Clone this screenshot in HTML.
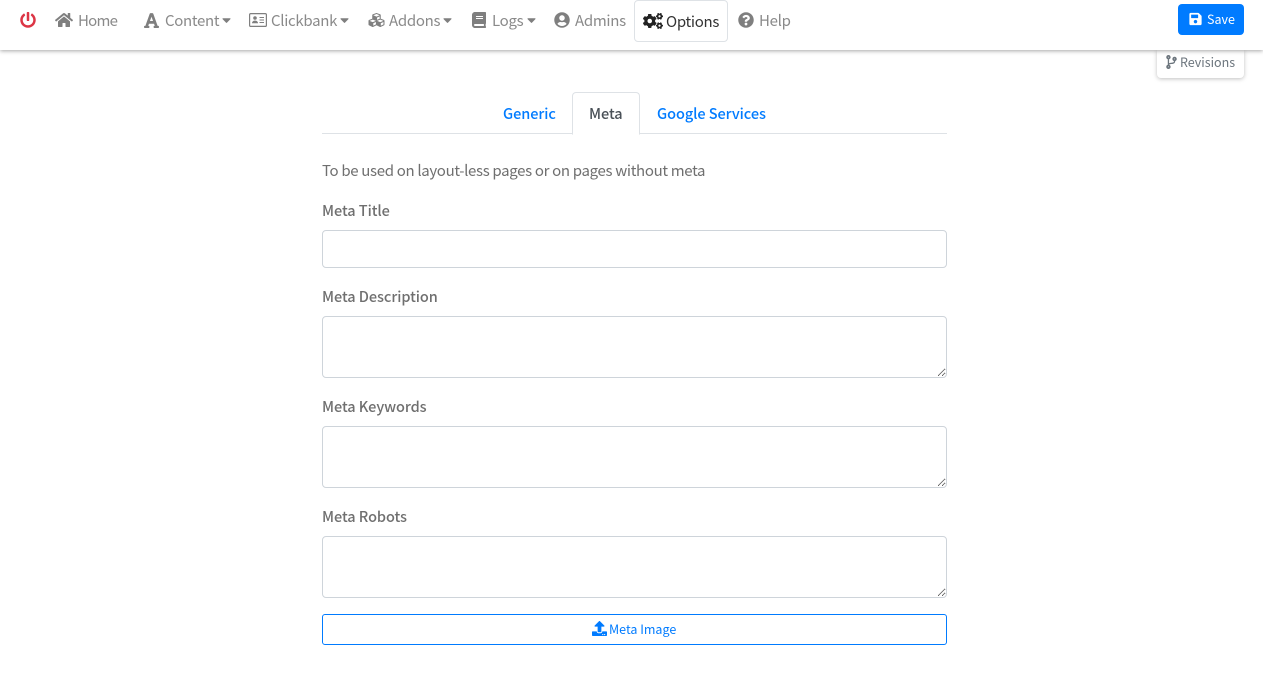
<!DOCTYPE html>
<html lang="en"><head><meta charset="utf-8"><title>Options</title>
<style>
html,body{margin:0;padding:0;width:1263px;height:683px;overflow:hidden;background:#fff}
body{position:relative;font-family:"Noto Sans CJK JP","Liberation Sans",sans-serif;color:#6f6f6f}
.t{position:absolute;white-space:nowrap;line-height:20px;height:20px}
.n{font-size:15px;color:#8a8a8a;top:11px;letter-spacing:-.3px}
.b{font-weight:500;font-size:14.5px;letter-spacing:-.06px}
svg{position:absolute;display:block}
.g{fill:#7f7f7f}
.nav{position:absolute;left:0;top:0;width:1263px;height:50px;background:#fff;box-shadow:0 1px 4px rgba(0,0,0,.35);z-index:3}
.rev{position:absolute;left:1157px;top:50px;width:87px;height:28px;background:#fff;border-radius:0 0 4px 4px;box-shadow:0 1px 4px rgba(0,0,0,.25);z-index:1}
.f{position:absolute;left:322px;width:623px;border:1px solid #ced4da;border-radius:4px;background:#fff;padding:0;margin:0;display:block;box-sizing:content-box;outline:0}
textarea.f{resize:vertical}
</style></head><body>
<div class="rev"></div>
<div class="nav">
<svg style="left:20px;top:12px" width="16" height="16" viewBox="0 0 512 512" fill="#dc3545"><path d="M400 54.1c63 45 104 118.6 104 201.9 0 136.8-110.8 247.7-247.5 248C120 504.3 8.2 393 8 256.4 7.9 173.1 48.9 99.3 111.8 54.2c11.7-8.3 28-4.8 35 7.7L162.6 90c5.9 10.5 3.1 23.8-6.6 31-41.5 30.8-68 79.6-68 134.9-.1 92.3 74.5 168.1 168 168.1 91.6 0 168.6-74.2 168-169.1-.3-51.8-24.7-101.8-68.1-134-9.7-7.2-12.4-20.5-6.4-30.9l15.8-28.1c7-12.4 23.2-16.1 34.8-7.8zM296 264V24c0-13.3-10.7-24-24-24h-32c-13.3 0-24 10.7-24 24v240c0 13.3 10.7 24 24 24h32c13.3 0 24-10.7 24-24z"/></svg>
<svg class="g" style="left:55px;top:12px" width="18" height="16" viewBox="0 0 576 512"><path d="M280.37 148.26L96 300.11V464a16 16 0 0 0 16 16l112.06-.29a16 16 0 0 0 15.92-16V368a16 16 0 0 1 16-16h64a16 16 0 0 1 16 16v95.64a16 16 0 0 0 16 16.05L464 480a16 16 0 0 0 16-16V300L295.67 148.26a12.19 12.19 0 0 0-15.3 0zM571.6 251.47L488 182.56V44.05a12 12 0 0 0-12-12h-56a12 12 0 0 0-12 12v72.61L318.47 43a48 48 0 0 0-61 0L4.34 251.47a12 12 0 0 0-1.6 16.9l25.5 31A12 12 0 0 0 45.15 301l235.22-193.74a12.19 12.19 0 0 1 15.3 0L530.9 301a12 12 0 0 0 16.9-1.6l25.5-31a12 12 0 0 0-1.7-16.93z"/></svg>
<span class="t n" style="left:78px;letter-spacing:-.75px">Home</span>
<svg class="g" style="left:144px;top:12px" width="15" height="17" viewBox="0 0 448 512"><path d="M432 416h-23.41L277.88 53.69A32 32 0 0 0 247.58 32h-47.16a32 32 0 0 0-30.3 21.69L39.41 416H16a16 16 0 0 0-16 16v32a16 16 0 0 0 16 16h128a16 16 0 0 0 16-16v-32a16 16 0 0 0-16-16h-19.58l23.3-64h152.56l23.3 64H304a16 16 0 0 0-16 16v32a16 16 0 0 0 16 16h128a16 16 0 0 0 16-16v-32a16 16 0 0 0-16-16zM176.85 272L224 142.51 271.15 272z"/></svg>
<span class="t n" style="left:165px">Content</span>
<svg class="g" style="left:221px;top:13px" width="11" height="14" viewBox="0 0 320 512"><path d="M31.3 192h257.3c17.8 0 26.7 21.5 14.1 34.1L174.1 354.8c-7.8 7.8-20.5 7.8-28.3 0L17.2 226.1C4.6 213.5 13.5 192 31.3 192z"/></svg>
<svg style="left:249px;top:13px" width="18" height="14" viewBox="0 0 18 14"><rect x=".6" y=".6" width="16.8" height="12.8" rx="1.2" fill="none" stroke="#7f7f7f" stroke-width="1.2"/><circle cx="6" cy="5" r="1.8" fill="#7f7f7f"/><path d="M3 10.2c0-1.6 1.2-2.6 3-2.6s3 1 3 2.6z" fill="#7f7f7f"/><path d="M10.5 4.5h4.5M10.5 7h4.5M10.5 9.5h4.5" stroke="#7f7f7f" stroke-width="1"/></svg>
<span class="t n" style="left:271px">Clickbank</span>
<svg class="g" style="left:339px;top:13px" width="11" height="14" viewBox="0 0 320 512"><path d="M31.3 192h257.3c17.8 0 26.7 21.5 14.1 34.1L174.1 354.8c-7.8 7.8-20.5 7.8-28.3 0L17.2 226.1C4.6 213.5 13.5 192 31.3 192z"/></svg>
<svg class="g" style="left:368px;top:12px" width="17" height="16" viewBox="0 0 512 512"><path d="M488.6 250.2L392 214V105.5c0-15-9.3-28.4-23.4-33.7l-100-37.5c-8.1-3.1-17.1-3.1-25.3 0l-100 37.5c-14.1 5.3-23.4 18.7-23.4 33.7V214l-96.6 36.2C9.3 255.5 0 268.9 0 283.9V394c0 13.6 7.7 26.1 19.9 32.2l100 50c10.1 5.1 22.1 5.1 32.2 0l103.9-52 103.9 52c10.1 5.1 22.1 5.1 32.2 0l100-50c12.2-6.1 19.9-18.6 19.9-32.2V283.9c0-15-9.3-28.4-23.4-33.7zM358 214.8l-85 31.9v-68.2l85-37v73.3zM154 104.1l102-38.2 102 38.2v.6l-102 41.4-102-41.4v-.6zm84 291.1l-85 42.5v-79.1l85-38.8v75.4zm0-112l-102 41.4-102-41.4v-.6l102-38.2 102 38.2v.6zm240 112l-85 42.5v-79.1l85-38.8v75.4zm0-112l-102 41.4-102-41.4v-.6l102-38.2 102 38.2v.6z"/></svg>
<span class="t n" style="left:389px">Addons</span>
<svg class="g" style="left:442px;top:13px" width="11" height="14" viewBox="0 0 320 512"><path d="M31.3 192h257.3c17.8 0 26.7 21.5 14.1 34.1L174.1 354.8c-7.8 7.8-20.5 7.8-28.3 0L17.2 226.1C4.6 213.5 13.5 192 31.3 192z"/></svg>
<svg class="g" style="left:472px;top:12px" width="14" height="16" viewBox="0 0 448 512"><path d="M448 360V24c0-13.3-10.7-24-24-24H96C43 0 0 43 0 96v320c0 53 43 96 96 96h328c13.3 0 24-10.7 24-24v-16c0-7.5-3.5-14.3-8.9-18.7-4.2-15.4-4.2-59.3 0-74.7 5.4-4.3 8.9-11.1 8.9-18.6zM128 134c0-3.3 2.7-6 6-6h212c3.3 0 6 2.7 6 6v20c0 3.3-2.7 6-6 6H134c-3.3 0-6-2.7-6-6v-20zm0 64c0-3.3 2.7-6 6-6h212c3.3 0 6 2.7 6 6v20c0 3.3-2.7 6-6 6H134c-3.3 0-6-2.7-6-6v-20zm253.4 250H96c-17.7 0-32-14.3-32-32 0-17.6 14.4-32 32-32h285.4c-1.9 17.1-1.9 46.9 0 64z"/></svg>
<span class="t n" style="left:492px">Logs</span>
<svg class="g" style="left:526px;top:13px" width="11" height="14" viewBox="0 0 320 512"><path d="M31.3 192h257.3c17.8 0 26.7 21.5 14.1 34.1L174.1 354.8c-7.8 7.8-20.5 7.8-28.3 0L17.2 226.1C4.6 213.5 13.5 192 31.3 192z"/></svg>
<svg class="g" style="left:554px;top:12px" width="16" height="16" viewBox="0 0 496 512"><path d="M248 8C111 8 0 119 0 256s111 248 248 248 248-111 248-248S385 8 248 8zm0 96c48.6 0 88 39.4 88 88s-39.4 88-88 88-88-39.4-88-88 39.4-88 88-88zm0 344c-58.7 0-111.3-26.6-146.5-68.2 18.8-35.4 55.6-59.8 98.5-59.8 2.4 0 4.8.4 7.1 1.1 13 4.2 26.6 6.9 40.9 6.9 14.3 0 28-2.7 40.9-6.9 2.3-.7 4.7-1.1 7.1-1.1 42.9 0 79.7 24.4 98.5 59.8C359.3 421.4 306.7 448 248 448z"/></svg>
<span class="t n" style="left:575px">Admins</span>
<div style="position:absolute;left:634px;top:0;width:92px;height:40px;border:1px solid #dee2e6;border-radius:4px"></div>
<svg style="left:643px;top:13px" width="20" height="16" viewBox="0 0 640 512" fill="#222"><path d="M512.1 191l-8.2 14.3c-3 5.3-9.4 7.5-15.1 5.4-11.8-4.4-22.6-10.7-32.1-18.6-4.6-3.8-5.8-10.5-2.8-15.7l8.2-14.3c-6.9-8-12.3-17.3-15.9-27.4h-16.5c-6 0-11.2-4.3-12.2-10.3-2-12-2.1-24.6 0-37.1 1-6 6.2-10.4 12.2-10.4h16.5c3.6-10.1 9-19.4 15.9-27.4l-8.2-14.3c-3-5.2-1.9-11.9 2.8-15.7 9.5-7.9 20.4-14.2 32.1-18.6 5.7-2.1 12.1.1 15.1 5.4l8.2 14.3c10.5-1.9 21.2-1.9 31.7 0L552 6.3c3-5.3 9.4-7.5 15.1-5.4 11.8 4.4 22.6 10.7 32.1 18.6 4.6 3.8 5.8 10.5 2.8 15.7l-8.2 14.3c6.9 8 12.3 17.3 15.9 27.4h16.5c6 0 11.2 4.3 12.2 10.3 2 12 2.1 24.6 0 37.1-1 6-6.2 10.4-12.2 10.4h-16.5c-3.6 10.1-9 19.4-15.9 27.4l8.2 14.3c3 5.2 1.9 11.9-2.8 15.7-9.5 7.9-20.4 14.2-32.1 18.6-5.7 2.1-12.1-.1-15.1-5.4l-8.2-14.3c-10.4 1.9-21.2 1.9-31.7 0zm-10.5-58.8c38.5 29.6 82.4-14.3 52.8-52.8-38.5-29.7-82.4 14.3-52.8 52.8zM386.3 286.1l33.7 16.8c10.1 5.8 14.5 18.1 10.5 29.1-8.9 24.2-26.4 46.4-42.6 65.8-7.4 8.9-20.2 11.1-30.3 5.3l-29.1-16.8c-16 13.7-34.6 24.6-54.9 31.7v33.6c0 11.6-8.3 21.6-19.7 23.6-24.6 4.2-50.4 4.4-75.9 0-11.5-2-20-11.9-20-23.6V418c-20.3-7.2-38.9-18-54.9-31.7L74 403c-10 5.8-22.9 3.6-30.3-5.3-16.2-19.4-33.3-41.6-42.2-65.7-4-10.9.4-23.2 10.5-29.1l33.3-16.8c-3.9-20.9-3.9-42.4 0-63.4L12 205.8c-10.1-5.8-14.6-18.1-10.5-29 8.9-24.2 26-46.4 42.2-65.8 7.4-8.9 20.2-11.1 30.3-5.3l29.1 16.8c16-13.7 34.6-24.6 54.9-31.7V57.1c0-11.5 8.2-21.5 19.6-23.5 24.6-4.2 50.5-4.4 76-.1 11.5 2 20 11.9 20 23.6v33.6c20.3 7.2 38.9 18 54.9 31.7l29.1-16.8c10-5.8 22.9-3.6 30.3 5.3 16.2 19.4 33.2 41.6 42.1 65.8 4 10.9.1 23.2-10 29.1l-33.7 16.8c3.9 21 3.9 42.5 0 63.5zm-117.6 21.1c59.2-77-28.7-164.9-105.7-105.7-59.2 77 28.7 164.9 105.7 105.7zm243.4 182.7l-8.2 14.3c-3 5.3-9.4 7.5-15.1 5.4-11.8-4.4-22.6-10.7-32.1-18.6-4.6-3.8-5.8-10.5-2.8-15.7l8.2-14.3c-6.9-8-12.3-17.3-15.9-27.4h-16.5c-6 0-11.2-4.3-12.2-10.3-2-12-2.1-24.6 0-37.1 1-6 6.2-10.4 12.2-10.4h16.5c3.6-10.1 9-19.4 15.9-27.4l-8.2-14.3c-3-5.2-1.9-11.9 2.8-15.7 9.5-7.9 20.4-14.2 32.1-18.6 5.7-2.1 12.1.1 15.1 5.4l8.2 14.3c10.5-1.9 21.2-1.9 31.7 0l8.2-14.3c3-5.3 9.4-7.5 15.1-5.4 11.8 4.4 22.6 10.7 32.1 18.6 4.6 3.8 5.8 10.5 2.8 15.7l-8.2 14.3c6.9 8 12.3 17.3 15.9 27.4h16.5c6 0 11.2 4.3 12.2 10.3 2 12 2.1 24.6 0 37.1-1 6-6.2 10.4-12.2 10.4h-16.5c-3.6 10.1-9 19.4-15.9 27.4l8.2 14.3c3 5.2 1.9 11.9-2.8 15.7-9.5 7.9-20.4 14.2-32.1 18.6-5.7 2.1-12.1-.1-15.1-5.4l-8.2-14.3c-10.4 1.9-21.2 1.9-31.7 0zM501.6 431c38.5 29.6 82.4-14.3 52.8-52.8-38.5-29.6-82.4 14.3-52.8 52.8z"/></svg>
<span class="t" style="left:666px;top:12px;font-size:15px;color:#333;letter-spacing:-.3px">Options</span>
<svg class="g" style="left:738px;top:12px" width="16" height="16" viewBox="0 0 512 512"><path d="M504 256c0 136.997-111.043 248-248 248S8 392.997 8 256C8 119.083 119.043 8 256 8s248 111.083 248 248zM262.655 90c-54.497 0-89.255 22.957-116.549 63.758-3.536 5.286-2.353 12.415 2.715 16.258l34.699 26.31c5.205 3.947 12.621 3.008 16.665-2.122 17.864-22.658 30.113-35.797 57.303-35.797 20.429 0 45.698 13.148 45.698 32.958 0 14.976-12.363 22.667-32.534 33.976C247.128 238.528 216 254.941 216 296v4c0 6.627 5.373 12 12 12h56c6.627 0 12-5.373 12-12v-1.333c0-28.462 83.186-29.647 83.186-106.667 0-58.002-60.165-102-116.531-102zM256 338c-25.365 0-46 20.635-46 46 0 25.364 20.635 46 46 46s46-20.636 46-46c0-25.365-20.635-46-46-46z"/></svg>
<span class="t n" style="left:759px">Help</span>
<div style="position:absolute;left:1178px;top:4px;width:66px;height:31px;background:#007bff;border-radius:4px"></div>
<svg style="left:1189px;top:12px" width="13" height="14" viewBox="0 0 448 512" fill="#fff"><path d="M433.941 129.941l-83.882-83.882A48 48 0 0 0 316.118 32H48C21.49 32 0 53.49 0 80v352c0 26.51 21.49 48 48 48h352c26.51 0 48-21.49 48-48V163.882a48 48 0 0 0-14.059-33.941zM224 416c-35.346 0-64-28.654-64-64 0-35.346 28.654-64 64-64s64 28.654 64 64c0 35.346-28.654 64-64 64zm96-304.52V212c0 6.627-5.373 12-12 12H76c-6.627 0-12-5.373-12-12V108c0-6.627 5.373-12 12-12h228.52c3.183 0 6.235 1.264 8.485 3.515l3.48 3.48A11.996 11.996 0 0 1 320 111.48z"/></svg>
<span class="t" style="left:1207px;top:9px;font-size:12.5px;color:#fff">Save</span>
</div>
<svg style="left:1166px;top:55px;z-index:2" width="11" height="14" viewBox="0 0 384 512" fill="#6c757d"><path d="M384 144c0-44.2-35.8-80-80-80s-80 35.8-80 80c0 36.4 24.3 67.1 57.5 76.8-.6 16.1-4.2 28.5-11 36.9-15.4 19.2-49.3 22.4-85.2 25.7-28.2 2.6-57.4 5.4-81.3 16.9v-144c32.5-10.2 56-40.5 56-76.3 0-44.2-35.8-80-80-80S0 35.8 0 80c0 35.8 23.5 66.1 56 76.3v199.3C23.5 365.9 0 396.2 0 432c0 44.2 35.8 80 80 80s80-35.8 80-80c0-34-21.2-63.1-51.2-74.6 3.1-5.2 7.8-9.8 14.9-13.4 16.2-8.2 40.4-10.4 66.1-12.8 42.2-3.9 90-8.4 118.2-43.4 14-17.4 21.1-39.8 21.6-67.9 31.6-10.8 54.4-40.7 54.4-75.9zM80 64c8.8 0 16 7.2 16 16s-7.2 16-16 16-16-7.2-16-16 7.2-16 16-16zm0 384c-8.8 0-16-7.2-16-16s7.2-16 16-16 16 7.2 16 16-7.2 16-16 16zm224-320c8.8 0 16 7.2 16 16s-7.2 16-16 16-16-7.2-16-16 7.2-16 16-16z"/></svg>
<span class="t" style="left:1180px;top:52px;font-size:12.5px;color:#6c757d;z-index:2">Revisions</span>

<div style="position:absolute;left:322px;top:133px;width:625px;height:1px;background:#dee2e6"></div>
<div style="position:absolute;left:572px;top:92px;width:66px;height:41px;border:1px solid #dee2e6;border-bottom:1px solid #fff;border-radius:4px 4px 0 0;background:#fff"></div>
<span class="t b" style="left:503px;top:104px;color:#007bff">Generic</span>
<span class="t b" style="left:589px;top:104px;color:#495057">Meta</span>
<span class="t b" style="left:657px;top:104px;color:#007bff">Google Services</span>
<span class="t" style="left:322px;top:161px;font-size:15px;letter-spacing:-.33px">To be used on layout-less pages or on pages without meta</span>
<span class="t b" style="left:322px;top:201px">Meta Title</span>
<input class="f" style="top:230px;height:36px">
<span class="t b" style="left:322px;top:287px">Meta Description</span>
<textarea class="f" style="top:316px;height:60px"></textarea>
<span class="t b" style="left:322px;top:397px">Meta Keywords</span>
<textarea class="f" style="top:426px;height:60px"></textarea>
<span class="t b" style="left:322px;top:507px">Meta Robots</span>
<textarea class="f" style="top:536px;height:60px"></textarea>
<div style="position:absolute;left:322px;top:614px;width:623px;height:29px;border:1px solid #007bff;border-radius:3px"></div>
<svg style="left:592px;top:621px" width="15" height="15" viewBox="0 0 512 512" fill="#007bff"><path d="M296 384h-80c-13.3 0-24-10.7-24-24V192h-87.7c-17.8 0-26.7-21.5-14.1-34.1L242.3 5.7c7.5-7.5 19.8-7.5 27.3 0l152.2 152.2c12.6 12.6 3.7 34.1-14.1 34.1H320v168c0 13.3-10.7 24-24 24zm216-8v112c0 13.3-10.7 24-24 24H24c-13.3 0-24-10.7-24-24V376c0-13.3 10.7-24 24-24h136v8c0 30.9 25.1 56 56 56h80c30.9 0 56-25.1 56-56v-8h136c13.3 0 24 10.7 24 24zm-124 88c0-11-9-20-20-20s-20 9-20 20 9 20 20 20 20-9 20-20zm64 0c0-11-9-20-20-20s-20 9-20 20 9 20 20 20 20-9 20-20z"/></svg>
<span class="t" style="left:609px;top:619px;font-size:12.5px;color:#007bff">Meta Image</span>
</body></html>
